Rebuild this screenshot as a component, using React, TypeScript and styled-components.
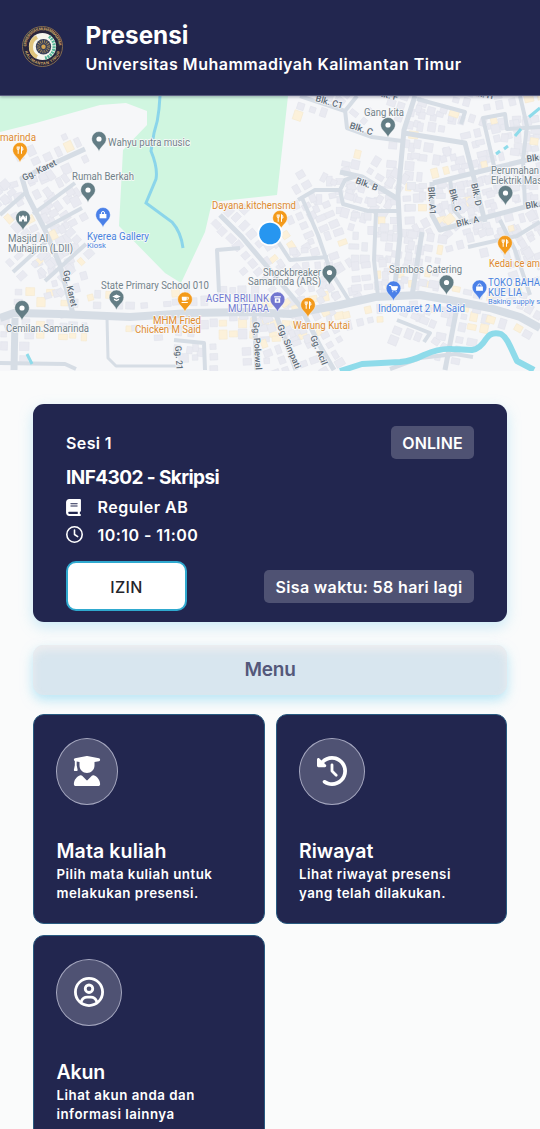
import React from "react";
import styled, { createGlobalStyle } from "styled-components";
import { FaBook, FaClockRotateLeft, FaRegCircleUser, FaRegClock, FaUserGraduate } from "react-icons/fa6";

const GlobalStyle = createGlobalStyle`
  * { box-sizing: border-box; }
  body { margin: 0; background: #fafbfb; overflow: hidden; }
`;

const Screen = styled.div`
  width: 100%;
  height: 100vh;
  overflow: hidden;
  font-family: Inter, "Liberation Sans", sans-serif;
  color: #fff;
`;

const Header = styled.header`
  position: relative;
  display: flex;
  align-items: center;
  gap: 22.5px;
  height: 96px;
  padding: 0 22px 3px;
  background: #22264f;
  border-bottom: 1px solid #5b5e80;
  box-shadow: 0 1px 3px rgba(20, 24, 60, 0.35);
`;

const Titles = styled.div`
  display: flex;
  flex-direction: column;
  padding-top: 6px;
`;

const Line = styled.div<{ $size: number; $height: number; $weight?: number; $track?: number }>`
  margin: 0;
  font-size: ${(p) => p.$size}px;
  line-height: ${(p) => p.$height}px;
  font-weight: ${(p) => p.$weight ?? 600};
  letter-spacing: ${(p) => p.$track ?? 0}px;
  white-space: nowrap;
`;

const MapView = styled.svg`
  display: block;
  width: 540px;
  height: 275px;
`;

const Content = styled.main`
  display: flex;
  flex-direction: column;
  padding: 32.5px 33px 0;
`;

const SessionCard = styled.section`
  display: flex;
  flex-direction: column;
  height: 218.5px;
  padding: 22px 33px 11px;
  border-radius: 11px;
  background: #22264f;
  box-shadow: 0 5px 14px rgba(120, 205, 240, 0.36);
`;

const SplitRow = styled.div`
  display: flex;
  align-items: center;
  justify-content: space-between;
`;

const SessionName = styled(Line)`
  padding-top: 2px;
`;

const Badge = styled.span<{ $width: number; $track: number }>`
  display: flex;
  align-items: center;
  justify-content: center;
  width: ${(p) => p.$width}px;
  height: 33px;
  padding-top: 1px;
  border-radius: 5px;
  background: #4f5273;
  font-size: 16px;
  font-weight: 600;
  letter-spacing: ${(p) => p.$track}px;
  white-space: nowrap;
`;

const Course = styled(Line)`
  padding-top: 3px;
`;

const Detail = styled.div`
  display: flex;
  align-items: center;
  height: 27.5px;
`;

const DetailIcon = styled.span`
  display: flex;
  width: 32.5px;
  margin-left: -1px;
`;

const ClockIcon = styled(DetailIcon)`
  width: 31.5px;
  margin-left: 0;
`;

const Actions = styled(SplitRow)`
  margin-top: auto;
`;

const PermitButton = styled.button`
  width: 121px;
  height: 50px;
  padding: 2px 0 0;
  border: 2px solid #2fa9cf;
  border-radius: 10px;
  background: #fff;
  color: #24252b;
  font: 500 16px Inter, sans-serif;
  letter-spacing: 0.3px;
`;

const MenuBar = styled.h2`
  display: flex;
  align-items: center;
  justify-content: center;
  height: 50px;
  margin: 22.5px 0 19.5px;
  border-radius: 11px;
  background: #d8e6ef;
  box-shadow: 0 5px 12px rgba(130, 212, 240, 0.55), inset 0 5px 9px rgba(240, 238, 240, 0.9);
  color: #54587a;
  font-size: 19px;
  font-weight: 600;
  letter-spacing: -0.2px;
`;

const MenuGrid = styled.div`
  display: grid;
  grid-template-columns: 1fr 1fr;
  gap: 11px;
`;

const MenuCard = styled.article`
  display: flex;
  flex-direction: column;
  align-items: flex-start;
  height: 210px;
  padding: 22.5px 22.5px 0;
  border: 1px solid #285a80;
  border-radius: 11px;
  background: #22264f;
`;

const IconDisc = styled.div<{ $width: number }>`
  display: flex;
  align-items: center;
  justify-content: center;
  flex: none;
  width: ${(p) => p.$width}px;
  height: 67px;
  margin: 0 0 32px -0.5px;
  border: 1px solid #a5a7bf;
  border-radius: 50%;
  background: #4f5273;
`;

function Logo() {
  return (
    <svg width="41" height="41" viewBox="0 0 41 41">
      <defs>
        <path id="ringTop" d="M4.2 20.5a16.3 16.3 0 1 1 32.6 0" />
        <path id="ringBottom" d="M2.2 20.5a18.3 18.3 0 0 0 36.6 0" />
      </defs>
      <circle cx="20.5" cy="20.5" r="20" fill="#28263c" stroke="#8d7352" strokeWidth="0.9" />
      <g fill="#d0aa68" fontFamily="Liberation Sans" fontWeight="700" fontSize="4">
        <text><textPath href="#ringTop" textLength="50">UNIVERSITAS MUHAMMADIYAH</textPath></text>
        <text><textPath href="#ringBottom" startOffset="5" textLength="47">KALIMANTAN TIMUR</textPath></text>
      </g>
      <circle cx="20.5" cy="20.5" r="13.6" fill="#f6f6ee" />
      <path d="M15 11a11.3 11.3 0 0 0 0 20" fill="none" stroke="#dfc47d" strokeWidth="4" />
      <path d="M27 10.5a12 12 0 0 1-4 21.5" fill="none" stroke="#55b698" strokeWidth="3.2" strokeDasharray="2 0.8" />
      <circle cx="21.5" cy="20.7" r="7.7" fill="#39415a" />
      <circle cx="21.5" cy="20.7" r="5" fill="none" stroke="#a98d58" strokeWidth="3" strokeDasharray="0.8 1.163" />
      <circle cx="21.5" cy="20.7" r="2.2" fill="#d3a552" />
    </svg>
  );
}

type Pt = [number, number];
type Road = { pts: Pt[]; w: number; sides?: boolean };

const roads: Road[] = [
  { w: 8, sides: true, pts: [[0, 318], [14, 313], [60, 314], [130, 317], [190, 313], [250, 312], [290, 314], [340, 305], [375, 297], [420, 295], [450, 300], [490, 308], [520, 317], [540, 328]] },
  { w: 5, sides: true, pts: [[85, 149], [22, 178], [27, 195], [45, 230], [60, 265], [73, 314]] },
  { w: 4, sides: true, pts: [[0, 215], [25, 193]] },
  { w: 4, sides: true, pts: [[33, 214], [75, 183]] },
  { w: 4, sides: true, pts: [[45, 228], [82, 208]] },
  { w: 4, sides: true, pts: [[13, 272], [48, 240]] },
  { w: 4, sides: true, pts: [[45, 281], [86, 244]] },
  { w: 5, sides: true, pts: [[415, 96], [404, 130], [398, 195], [400, 235], [394, 296]] },
  { w: 5, sides: true, pts: [[404, 133], [465, 143], [477, 190], [485, 222]] },
  { w: 5, sides: true, pts: [[433, 183], [490, 169], [540, 157]] },
  { w: 5, sides: true, pts: [[340, 172], [362, 177], [398, 199]] },
  { w: 5, sides: true, pts: [[432, 182], [432, 215], [440, 230], [480, 219], [540, 203]] },
  { w: 4, sides: true, pts: [[450, 179], [454, 210], [465, 223]] },
  { w: 4, sides: true, pts: [[540, 127], [507, 129], [505, 114], [483, 118], [494, 166]] },
  { w: 4, sides: true, pts: [[417, 99], [465, 112], [461, 124]] },
  { w: 4, sides: true, pts: [[300, 96], [345, 111], [357, 96]] },
  { w: 4, pts: [[345, 110], [347, 128], [372, 137], [402, 141]] },
  { w: 4, sides: true, pts: [[298, 200], [315, 190], [340, 190], [345, 180], [357, 176]] },
  { w: 4, sides: true, pts: [[302, 198], [318, 235], [330, 270], [350, 302]] },
  { w: 4, sides: true, pts: [[340, 190], [343, 204], [368, 211], [400, 211]] },
  { w: 4, pts: [[240, 248], [217, 250], [219, 292]] },
  { w: 5, sides: true, pts: [[220, 215], [242, 237], [270, 270], [300, 306], [320, 346], [334, 370]] },
  { w: 4, sides: true, pts: [[275, 237], [290, 260], [328, 257]] },
  { w: 5, sides: true, pts: [[254, 312], [257, 370]] },
  { w: 5, sides: true, pts: [[275, 312], [296, 370]] },
  { w: 5, sides: true, pts: [[422, 232], [412, 296]] },
  { w: 5, sides: true, pts: [[458, 302], [445, 370]] },
  { w: 4, sides: true, pts: [[376, 212], [374, 260], [378, 296]] },
  { w: 4, sides: true, pts: [[500, 220], [515, 250], [530, 295]] },
  { w: 4, sides: true, pts: [[540, 222], [517, 236], [468, 247]] },
  { w: 7, sides: true, pts: [[15, 318], [14, 370]] },
  { w: 3, pts: [[107, 318], [108, 358], [116, 366], [180, 366]] },
  { w: 4, sides: true, pts: [[174, 340], [204, 343], [205, 370]] },
  { w: 4, pts: [[0, 363], [65, 364], [76, 369]] },
  { w: 4, pts: [[390, 369], [420, 358], [455, 354], [473, 357]] },
  { w: 4, sides: true, pts: [[397, 320], [430, 333], [424, 342]] },
  { w: 4, sides: true, pts: [[520, 96], [527, 126], [523, 160], [525, 205]] },
];

type Block = { x: number; y: number; w: number; h: number; a: number; shop: boolean };

const parkPath =
  "M0 96H288L277 195L212 202L205 232L181 283L165 273L119 226L123 150L147 125V111L126 103L100 105L36 123L0 132Z";

// Rows of houses following both sides of each street.
function buildBlocks(): Block[] {
  let seed = 17;
  const rnd = () => {
    seed = (seed * 16807) % 2147483647;
    return seed / 2147483647;
  };
  const out: Block[] = [];
  roads.forEach((road, index) => {
    if (!road.sides) return;
    for (let i = 0; i < road.pts.length - 1; i++) {
      const [x1, y1] = road.pts[i];
      const [x2, y2] = road.pts[i + 1];
      const len = Math.hypot(x2 - x1, y2 - y1);
      const ux = (x2 - x1) / len;
      const uy = (y2 - y1) / len;
      for (let d = 4; d < len; d += 9 + rnd() * 4) {
        for (const side of [-1, 1]) {
          for (const ring of [0, 1]) {
            if (rnd() < (ring ? 0.6 : 0.24)) continue;
            const off = side * (road.w / 2 + 6 + ring * 11 + rnd() * 2);
            const x = x1 + ux * d - uy * off;
            const y = y1 + uy * d + ux * off;
            if (x > 117 && x < 212 && y < 285) continue;
            if (x > 210 && x < 290 && y < 204) continue;
            if (x < 147 && y < 112) continue;
            out.push({
              x, y,
              w: 5 + rnd() * 4, h: 5 + rnd() * 5,
              a: (Math.atan2(uy, ux) * 180) / Math.PI,
              shop: rnd() < (index === 0 ? 0.4 : 0.07),
            });
          }
        }
      }
    }
  });
  return out;
}

const blocks = buildBlocks();
const toPath = (pts: Pt[]) => "M" + pts.map((p) => p.join(" ")).join("L");

const GREY = "#637d85";
const ORANGE = "#f39a1b";
const BLUE = "#4a80e8";
const VIOLET = "#7175cf";

type PinKind = "dot" | "food" | "bag" | "cart" | "cup" | "school" | "mosque" | "atm";
const pins: { x: number; y: number; c: string; k: PinKind }[] = [
  { x: 20, y: 151, c: ORANGE, k: "food" },
  { x: 99, y: 140, c: GREY, k: "dot" },
  { x: 88, y: 191, c: GREY, k: "dot" },
  { x: 23, y: 219, c: GREY, k: "mosque" },
  { x: 103, y: 216, c: BLUE, k: "bag" },
  { x: 388, y: 126, c: GREY, k: "dot" },
  { x: 280, y: 219, c: ORANGE, k: "food" },
  { x: 505.5, y: 194, c: GREY, k: "dot" },
  { x: 505, y: 244, c: ORANGE, k: "food" },
  { x: 329.5, y: 273.5, c: GREY, k: "dot" },
  { x: 446.5, y: 283.5, c: GREY, k: "dot" },
  { x: 393.5, y: 289.5, c: BLUE, k: "cart" },
  { x: 479.5, y: 288.5, c: BLUE, k: "bag" },
  { x: 22, y: 309, c: GREY, k: "dot" },
  { x: 116.5, y: 298.5, c: GREY, k: "school" },
  { x: 185, y: 300.5, c: ORANGE, k: "cup" },
  { x: 277.5, y: 300.5, c: VIOLET, k: "atm" },
  { x: 308, y: 306, c: ORANGE, k: "food" },
];

const glyphs: Record<PinKind, React.ReactNode> = {
  dot: <circle r="2.6" fill="#fff" />,
  food: <path d="M-2.8-3.5v2.2q0 1 1 1V3.8M-.8-3.5v2.2q0 1-1 1M-1.8-3.5v3M1.5 3.8v-7.3q1.5.4 1.5 3.5H1.7" fill="none" stroke="#fff" strokeWidth="1" />,
  bag: <><path d="M-3.4-1h6.8v4.3h-6.8z" fill="#fff" /><path d="M-1.6-1v-1q0-1.5 1.6-1.5t1.6 1.5v1" fill="none" stroke="#fff" /></>,
  cart: <path d="M-4-3h1.6l1.2 4.5h4L4-1.8h-6M-.8 3.2h.1M2.6 3.2h.1" fill="#fff" stroke="#fff" strokeWidth="1" strokeLinecap="round" />,
  cup: <><path d="M-3.2-2.8h5v2.5q0 1.6-1.6 1.6h-1.8q-1.6 0-1.6-1.6zM-3.4 2.4h6.2v1h-6.2z" fill="#fff" /><path d="M1.8-2.2h1.6v1.8H1.8" fill="none" stroke="#fff" strokeWidth=".8" /></>,
  school: <path d="M-4.2-1L0-3 4.2-1 0 1zM-2.6 1L0 2.2 2.6 1v1.6L0 3.8l-2.6-1.2z" fill="#fff" />,
  mosque: <path d="M-4 3.4v-5l.8-1.2.8 1.2V.4q.2-1.7 2.4-3.4Q2.2-1.3 2.4.4v-2l.8-1.2.8 1.2v5H1V2q-1-1.4-2 0v1.4z" fill="#fff" />,
  atm: <path d="M-3.3-3.3h6.6v1.3h-6.6zM-2.7-1.3h5.4v4.5h-5.4zM-1 0v2h2V0z" fill="#fff" fillRule="evenodd" />,
};

type Label = { x: number; y: number; t: string; w: number; c?: string; s?: number; r?: number };
const places: Label[] = [
  { x: 0, y: 140.5, t: "marinda", w: 36, c: "#dd8a30" },
  { x: 108, y: 146, t: "Wahyu putra music", w: 82 },
  { x: 72, y: 180, t: "Rumah Berkah", w: 62 },
  { x: 8, y: 242, t: "Masjid Al", w: 40 },
  { x: 8, y: 252, t: "Muhajirin (LDII)", w: 65 },
  { x: 87, y: 240, t: "Kyerea Gallery", w: 62, c: "#4a83df" },
  { x: 87, y: 247.5, t: "Kiosk", w: 19, c: "#4a83df", s: 7.5 },
  { x: 364, y: 115.5, t: "Gang kita", w: 40 },
  { x: 212, y: 209, t: "Dayana.kitchensmd", w: 84, c: "#dd8a30" },
  { x: 491, y: 174, t: "Perumahan", w: 48 },
  { x: 491, y: 184, t: "Elektrik Mas", w: 51 },
  { x: 101, y: 288.5, t: "State Primary School 010", w: 108 },
  { x: 6, y: 331.5, t: "Cemilan.Samarinda", w: 83 },
  { x: 153, y: 323.5, t: "MHM Fried", w: 48, c: "#dd8a30" },
  { x: 135, y: 333, t: "Chicken M Said", w: 66, c: "#dd8a30" },
  { x: 263, y: 275.5, t: "Shockbreaker", w: 58 },
  { x: 248, y: 285, t: "Samarinda (ARS)", w: 73 },
  { x: 206, y: 302, t: "AGEN BRILINK", w: 63, c: "#7078d0" },
  { x: 228, y: 311.5, t: "MUTIARA", w: 41, c: "#7078d0" },
  { x: 293, y: 328.5, t: "Warung Kutai", w: 57, c: "#dd8a30" },
  { x: 389, y: 273, t: "Sambos Catering", w: 73 },
  { x: 378, y: 312, t: "Indomaret 2 M. Said", w: 87, c: "#4a83df" },
  { x: 489, y: 267, t: "Kedai ce am", w: 51, c: "#dd8a30" },
  { x: 488, y: 286, t: "TOKO BAHA", w: 52, c: "#4a83df" },
  { x: 488, y: 296, t: "KUE LIA", w: 34, c: "#4a83df" },
  { x: 488, y: 303.5, t: "Baking supply s", w: 52, c: "#4a83df", s: 7.5 },
];

const streets: Label[] = [
  { x: 24, y: 181, t: "Gg. Karet", w: 37, r: -26 },
  { x: 63, y: 271, t: "Gg. Karet", w: 37, r: 77 },
  { x: 315, y: 101, t: "Blk. C1", w: 28, r: 16 },
  { x: 349, y: 128, t: "Blk. C", w: 24, r: 18 },
  { x: 375, y: 95, t: "Blk. F", w: 23, r: 14 },
  { x: 470, y: 95, t: "Blk. H", w: 23, r: 10 },
  { x: 355, y: 183, t: "Blk. B", w: 23, r: 20 },
  { x: 428, y: 187, t: "Blk. A1", w: 28, r: 86 },
  { x: 449, y: 190, t: "Blk. C", w: 23, r: 74 },
  { x: 471, y: 184, t: "Blk. D", w: 23, r: 78 },
  { x: 457, y: 227, t: "Blk. A", w: 23, r: -13 },
  { x: 527, y: 162, t: "Blk.", w: 15, r: -8 },
  { x: 526, y: 209, t: "Blk.", w: 15, r: -10 },
  { x: 253, y: 322, t: "Gg. Polewal", w: 48, r: 87 },
  { x: 277, y: 326, t: "Gg. Simpati", w: 47, r: 67 },
  { x: 310, y: 337, t: "Gg. Acil", w: 31, r: 67 },
  { x: 175, y: 346, t: "Gg. 21", w: 24, r: 86 },
];

function AreaMap() {
  return (
    <MapView viewBox="0 96 540 275">
      <rect y="96" width="540" height="275" fill="#f6f7f9" />
      {blocks.map((b, i) => (
        <rect
          key={i}
          x={-b.w / 2}
          y={-b.h / 2}
          width={b.w}
          height={b.h}
          fill={b.shop ? "#fcf1da" : "#e9eaf1"}
          stroke={b.shop ? "#f5ead0" : "#e2e4ec"}
          strokeWidth="0.6"
          transform={`translate(${b.x.toFixed(1)} ${b.y.toFixed(1)}) rotate(${b.a.toFixed(0)})`}
        />
      ))}
      <path d={parkPath} fill="#d0f6e0" />
      <path d="M160 96L159 109Q158 121 154 133L151 151Q158 168 156 179L146 203L172 222Q181 232 183 248" fill="none" stroke="#8bd5ea" strokeWidth="3" />
      {roads.map((r, i) => (
        <path key={i} d={toPath(r.pts)} fill="none" stroke="#d6dde5" strokeWidth={r.w} strokeLinejoin="round" />
      ))}
      <path d="M340 371L362 364L400 362Q412 361 424 355Q440 348 452 349L472 350Q480 349 486 339Q491 331 501 334Q506 337 510 346L517 361L534 370" fill="none" stroke="#8edbea" strokeWidth="6" strokeLinejoin="round" />
      <path d="M540 108L529 117M521 129L515 136M508 146L504 149M500 151L496 154M27 354L32 364" stroke="#8edbea" strokeWidth="3" />
      {streets.map((l, i) => (
        <text
          key={i}
          transform={`translate(${l.x} ${l.y}) rotate(${l.r})`}
          textLength={l.w}
          lengthAdjust="spacingAndGlyphs"
          fontFamily="Roboto"
          fontSize="9"
          fontWeight="500"
          fill="#5f6c77"
          stroke="#f2f4f7"
          strokeWidth="1.6"
          paintOrder="stroke"
        >
          {l.t}
        </text>
      ))}
      {pins.map((p, i) => (
        <g key={i} transform={`translate(${p.x} ${p.y})`}>
          <path d="M0 11.5C-1.2 6.5-7.3 4.5-7.3-1.2a7.3 7.3 0 0 1 14.6 0C7.3 4.5 1.2 6.5 0 11.5z" fill={p.c} stroke="#fff" strokeWidth="0.4" />
          <g transform="translate(0 -1)">{glyphs[p.k]}</g>
        </g>
      ))}
      {places.map((l, i) => (
        <text
          key={i}
          x={l.x}
          y={l.y}
          textLength={l.w}
          lengthAdjust="spacingAndGlyphs"
          fontFamily="Roboto"
          fontSize={l.s ?? 10}
          fill={l.c ?? "#71818a"}
          stroke="#fafafa"
          strokeWidth="1.4"
          paintOrder="stroke"
        >
          {l.t}
        </text>
      ))}
      <circle cx="270" cy="233.5" r="12.6" fill="#fff" />
      <circle cx="270" cy="233.5" r="10.8" fill="#2796f0" />
    </MapView>
  );
}

const menu = [
  { title: "Mata kuliah", track: 0.12, lines: ["Pilih mata kuliah untuk", "melakukan presensi."], disc: 62, icon: <FaUserGraduate size={30} /> },
  { title: "Riwayat", track: 0, lines: ["Lihat riwayat presensi", "yang telah dilakukan."], disc: 66, icon: <FaClockRotateLeft size={30} /> },
  { title: "Akun", track: -0.2, lines: ["Lihat akun anda dan", "informasi lainnya"], disc: 66, icon: <FaRegCircleUser size={30} /> },
];

export default function App() {
  return (
    <Screen>
      <GlobalStyle />
      <Header>
        <Logo />
        <Titles>
          <Line as="h1" $size={24.3} $height={31} $weight={700}>Presensi</Line>
          <Line $size={16} $height={27} $track={0.5}>Universitas Muhammadiyah Kalimantan Timur</Line>
        </Titles>
      </Header>
      <AreaMap />
      <Content>
        <SessionCard>
          <SplitRow>
            <SessionName $size={16} $height={31} $track={0.4}>Sesi 1</SessionName>
            <Badge $width={83} $track={0.1}>ONLINE</Badge>
          </SplitRow>
          <Course $size={19} $height={32} $weight={700} $track={-0.58}>INF4302 - Skripsi</Course>
          <Detail>
            <DetailIcon><FaBook size={17} /></DetailIcon>
            <Line $size={16} $height={27} $track={0.5}>Reguler AB</Line>
          </Detail>
          <Detail>
            <ClockIcon><FaRegClock size={17} /></ClockIcon>
            <Line $size={16} $height={28} $track={0.45}>10:10 - 11:00</Line>
          </Detail>
          <Actions>
            <PermitButton>IZIN</PermitButton>
            <Badge $width={210} $track={0.36}>Sisa waktu: 58 hari lagi</Badge>
          </Actions>
        </SessionCard>
        <MenuBar>Menu</MenuBar>
        <MenuGrid>
          {menu.map((m) => (
            <MenuCard key={m.title}>
              <IconDisc $width={m.disc}>{m.icon}</IconDisc>
              <Line $size={19.5} $height={28} $track={m.track}>{m.title}</Line>
              {m.lines.map((l) => (
                <Line key={l} $size={13.3} $height={19.5} $track={0.5}>{l}</Line>
              ))}
            </MenuCard>
          ))}
        </MenuGrid>
      </Content>
    </Screen>
  );
}
